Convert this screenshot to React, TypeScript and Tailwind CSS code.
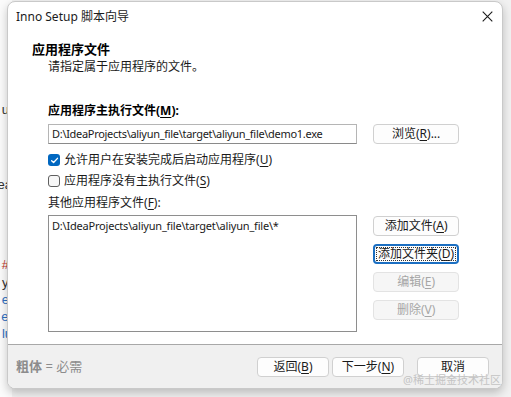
import React from 'react';

const font = { fontFamily: '"Noto Sans", "Noto Sans CJK SC", sans-serif' };

// accelerator letter, underlined like a Win32 mnemonic
const Key: React.FC<{ k: string }> = ({ k }) => (
  <span>
    (<span className="underline underline-offset-2">{k}</span>)
  </span>
);

type BtnProps = { children: React.ReactNode; disabled?: boolean; focused?: boolean; className?: string };

const WinButton: React.FC<BtnProps> = ({ children, disabled, focused, className = '' }) => {
  let look = 'border border-[#d0d0d0] bg-[#fdfdfd] text-[#1a1a1a]';
  if (disabled) look = 'border border-[#e3e3e3] bg-[#f6f6f6] text-[#a6a6a6]';
  if (focused) look = 'border-2 border-[#1b6fc2] bg-[#fdfdfd] text-[#1a1a1a]';
  return (
    <div className={`relative flex items-center justify-center h-[20px] rounded-[4px] text-[12px] leading-none ${look} ${className}`}>
      {focused && <span className="absolute inset-[1px] border border-dotted border-[#333]" />}
      {children}
    </div>
  );
};

const CheckRow: React.FC<{ checked?: boolean; children: React.ReactNode }> = ({ checked, children }) => (
  <div className="flex items-center gap-[4px] h-[16px]">
    {checked ? (
      <span className="flex items-center justify-center w-[12px] h-[12px] rounded-[3px] bg-[#0067c0]">
        <svg width="9" height="9" viewBox="0 0 10 10">
          <path d="M1.8 5.2 L4 7.3 L8.3 2.6" fill="none" stroke="white" strokeWidth="1.5" strokeLinecap="round" strokeLinejoin="round" />
        </svg>
      </span>
    ) : (
      <span className="w-[12px] h-[12px] rounded-[3px] border border-[#5f5f5f] bg-[#f7f7f7]" />
    )}
    <span>{children}</span>
  </div>
);

export default function App() {
  return (
    <div className="relative w-[511px] h-[397px] overflow-hidden bg-[#f1f1f1] text-[#1a1a1a]" style={font}>
      {/* editor behind the dialog */}
      <div className="absolute inset-y-0 left-0 w-[12px] bg-[#fbfbfb] text-[13px] leading-none" style={{ fontFamily: '"Liberation Sans", sans-serif' }}>
        <span className="absolute top-[103px] right-[3px] text-[#333]">u</span>
        <span className="absolute top-[178px] right-[0px] text-[#333]">ea</span>
        <span className="absolute top-[258px] right-[3px] text-[#c0392b]">#</span>
        <span className="absolute top-[276px] right-[0px] text-[#333]">y/</span>
        <span className="absolute top-[293px] right-[3px] text-[#2f6fbf]">e</span>
        <span className="absolute top-[310px] right-[0px] text-[#2f6fbf]">e:</span>
        <span className="absolute top-[327px] right-[0px] text-[#2f6fbf]">lu</span>
      </div>

      {/* dialog window */}
      <div className="absolute left-[7px] top-[1px] w-[496px] h-[388px] flex flex-col rounded-[8px] border border-[#c9c9c9] bg-white overflow-hidden shadow-[0_4px_10px_rgba(0,0,0,0.22)]">
        {/* title bar */}
        <div className="flex items-center justify-between h-[29px] pl-[8px] pr-[9px] shrink-0">
          <span className="text-[12px] text-[#1b1b1b]">Inno Setup 脚本向导</span>
          <svg width="11" height="11" viewBox="0 0 11 11">
            <path d="M0.7 0.7 L10.3 10.3 M10.3 0.7 L0.7 10.3" stroke="#1b1b1b" strokeWidth="1.1" />
          </svg>
        </div>

        {/* page header */}
        <div className="pl-[24px] pt-[10px] text-[12px] leading-[17px]">
          <div className="font-bold text-[13px] text-black">应用程序文件</div>
          <div className="pl-[16px]">请指定属于应用程序的文件。</div>
        </div>

        {/* page body */}
        <div className="flex-1 pl-[40px] pr-[43px] pt-[28px] text-[12px] leading-[16px]">
          <div className="font-bold text-black">
            应用程序主执行文件<Key k="M" />:
          </div>
          <div className="flex items-center gap-[16px] mt-[5px]">
            <div className="flex items-center w-[310px] h-[20px] border border-[#b5b5b5] border-b-[#8a8a8a] px-[3px] text-[11px] tracking-[-0.3px] whitespace-nowrap overflow-hidden">
              D:\IdeaProjects\aliyun_file\target\aliyun_file\demo1.exe
            </div>
            <WinButton className="w-[86px]">
              浏览<Key k="R" />...
            </WinButton>
          </div>
          <div className="flex flex-col gap-[5px] mt-[8px]">
            <CheckRow checked>
              允许用户在安装完成后启动应用程序<Key k="U" />
            </CheckRow>
            <CheckRow>
              应用程序没有主执行文件<Key k="S" />
            </CheckRow>
          </div>
          <div className="mt-[6px]">
            其他应用程序文件<Key k="F" />:
          </div>
          <div className="flex items-start gap-[16px] mt-[4px]">
            <div className="w-[310px] h-[117px] border border-[#8e8e8e] px-[3px] pt-[2px] text-[11px] tracking-[-0.2px] whitespace-nowrap">
              D:\IdeaProjects\aliyun_file\target\aliyun_file\*
            </div>
            <div className="flex flex-col gap-[8px] w-[86px] pt-[1px]">
              <WinButton>
                添加文件<Key k="A" />
              </WinButton>
              <WinButton focused>
                添加文件夹<Key k="D" />
              </WinButton>
              <WinButton disabled>
                编辑<Key k="E" />
              </WinButton>
              <WinButton disabled>
                删除<Key k="V" />
              </WinButton>
            </div>
          </div>
        </div>

        {/* footer */}
        <div className="flex items-center h-[44px] shrink-0 border-t border-[#a8a8a8] bg-[#f0f0f0] pl-[8px] pr-[13px] text-[13px]">
          <span className="flex-1 text-[#8c8c8c]">
            <span className="font-bold">粗体</span> = 必需
          </span>
          <div className="flex items-center">
            <WinButton className="w-[72px]">
              返回<Key k="B" />
            </WinButton>
            <WinButton className="w-[72px] ml-[3px]">
              下一步<Key k="N" />
            </WinButton>
            <WinButton className="w-[72px] ml-[13px]">取消</WinButton>
          </div>
        </div>
      </div>

      {/* watermark */}
      <span className="absolute left-[403px] top-[374px] text-[11px] leading-none text-[#c4c4c4]">@稀土掘金技术社区</span>
    </div>
  );
}
